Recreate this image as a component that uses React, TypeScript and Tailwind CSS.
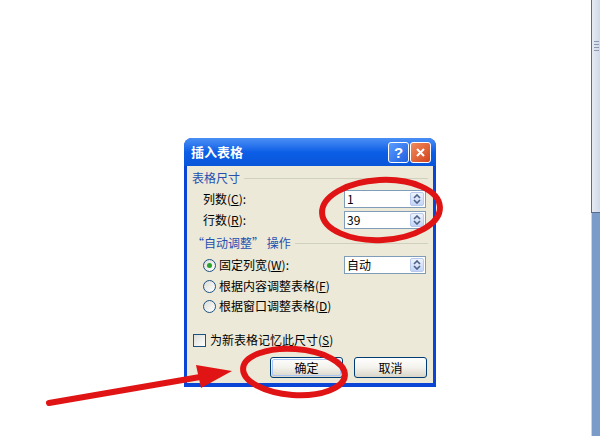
const Spin = ({ value }: { value: string }) => (
  <div className="flex h-[18px] w-[82px] items-center border border-[#7f9db9] bg-white pl-[2px] pr-[1px]">
    <span className="flex-1 text-[12px] leading-[14px] text-black">{value}</span>
    <div className="flex h-[14px] w-[14px] flex-col items-center justify-center rounded-[2px] border border-[#b7c9ef] bg-gradient-to-b from-[#eef3fd] to-[#c3d4f7]">
      <svg width="8" height="10" viewBox="0 0 8 10">
        <path d="M1 4 L4 1 L7 4" fill="none" stroke="#4d6185" strokeWidth="1.6" />
        <path d="M1 6 L4 9 L7 6" fill="none" stroke="#4d6185" strokeWidth="1.6" />
      </svg>
    </div>
  </div>
);

const Radio = ({ checked }: { checked?: boolean }) => (
  <div className="flex h-[13px] w-[13px] items-center justify-center rounded-full border border-[#1c5180] bg-gradient-to-br from-[#dcdcd7] to-white">
    {checked && <div className="h-[5px] w-[5px] rounded-full bg-[#2aa12a]" />}
  </div>
);

const GroupHeader = ({ children }: { children: React.ReactNode }) => (
  <div className="flex h-[14px] items-center pl-[5px] pr-[5px]">
    <span className="text-[12px] leading-[14px] text-[#2450b0]">{children}</span>
    <div className="ml-[4px] h-px flex-1 bg-[#d0d0bf]" />
  </div>
);

const XpButton = ({ label, focused }: { label: string; focused?: boolean }) => (
  <div className="flex h-[21px] w-[73px] items-center justify-center rounded-[3px] border border-[#003c74] bg-gradient-to-b from-white via-[#f3f2ec] to-[#d9d5c9] p-px">
    <div
      className={
        focused
          ? "flex h-full w-full items-center justify-center rounded-[2px] border border-[#a9c6f5]"
          : "flex h-full w-full items-center justify-center"
      }
    >
      <span className="text-[12px] leading-[14px] text-black">{label}</span>
    </div>
  </div>
);

export default function App() {
  return (
    <div className="flex h-[436px] w-[600px] bg-white font-['Noto_Sans_CJK_SC',sans-serif]">
      {/* page area */}
      <div className="relative flex-1 pl-[184px] pt-[138px]">
        <div className="flex h-[249px] w-[252px] flex-col rounded-t-[8px] bg-[#0b45d6]">
          {/* title bar */}
          <div className="flex h-[28px] items-center rounded-t-[8px] bg-gradient-to-b from-[#4a8ff5] via-[#0b5fe6] to-[#0a55da] pl-[7px] pr-[5px]">
            <span className="flex-1 text-[13px] font-bold leading-[16px] text-white">插入表格</span>
            <div className="flex items-center gap-[1px]">
              <div className="flex h-[21px] w-[21px] items-center justify-center rounded-[3px] border border-white bg-gradient-to-br from-[#5b9cff] to-[#1f5fe0]">
                <span className="font-['Liberation_Sans',sans-serif] text-[15px] font-bold leading-none text-white">?</span>
              </div>
              <div className="flex h-[21px] w-[21px] items-center justify-center rounded-[3px] border border-white bg-gradient-to-br from-[#f08a5c] to-[#d2411a]">
                <svg width="11" height="11" viewBox="0 0 11 11">
                  <path d="M2 2 L9 9 M9 2 L2 9" stroke="white" strokeWidth="2" />
                </svg>
              </div>
            </div>
          </div>
          {/* body */}
          <div className="mx-[3px] mb-[4px] flex flex-1 flex-col bg-[#ece9d8] pt-[5px]">
            <GroupHeader>表格尺寸</GroupHeader>
            <div className="mt-[5px] flex h-[18px] items-center pl-[16px] pr-[7px]">
              <span className="flex-1 text-[12px] leading-[14px] text-black">
                列数(<u>C</u>):
              </span>
              <Spin value="1" />
            </div>
            <div className="mt-[3px] flex h-[18px] items-center pl-[16px] pr-[7px]">
              <span className="flex-1 text-[12px] leading-[14px] text-black">
                行数(<u>R</u>):
              </span>
              <Spin value="39" />
            </div>
            <div className="mt-[7px]">
              <GroupHeader>“自动调整” 操作</GroupHeader>
            </div>
            <div className="mt-[6px] flex h-[18px] items-center pl-[16px] pr-[7px]">
              <Radio checked />
              <span className="ml-[3px] flex-1 text-[12px] leading-[14px] text-black">
                固定列宽(<u>W</u>):
              </span>
              <Spin value="自动" />
            </div>
            <div className="mt-[3px] flex h-[18px] items-center pl-[16px]">
              <Radio />
              <span className="ml-[3px] text-[12px] leading-[14px] text-black">
                根据内容调整表格(<u>F</u>)
              </span>
            </div>
            <div className="mt-[2px] flex h-[18px] items-center pl-[16px]">
              <Radio />
              <span className="ml-[3px] text-[12px] leading-[14px] text-black">
                根据窗口调整表格(<u>D</u>)
              </span>
            </div>
            <div className="mt-[16px] flex h-[18px] items-center pl-[6px]">
              <div className="h-[13px] w-[13px] border border-[#1c5180] bg-gradient-to-br from-[#dcdcd7] to-white" />
              <span className="ml-[4px] text-[12px] leading-[14px] text-black">
                为新表格记忆此尺寸(<u>S</u>)
              </span>
            </div>
            <div className="mt-[8px] flex justify-end gap-[11px] pr-[6px]">
              <XpButton label="确定" focused />
              <XpButton label="取消" />
            </div>
          </div>
        </div>

        {/* red annotations */}
        <svg className="pointer-events-none absolute left-0 top-0" width="591" height="436" viewBox="0 0 591 436">
          <ellipse cx="381" cy="210" rx="59" ry="30" fill="none" stroke="#e01414" strokeWidth="6" transform="rotate(-3 381 210)" />
          <ellipse cx="294" cy="372" rx="51" ry="23" fill="none" stroke="#e01414" strokeWidth="6" transform="rotate(4 294 372)" />
          <line x1="49" y1="403" x2="206" y2="376" stroke="#e01414" strokeWidth="6" strokeLinecap="round" />
          <polygon points="232,371 196,365 201,388" fill="#e01414" />
        </svg>
      </div>

      {/* scrollbar strip */}
      <div className="flex w-[9px] flex-col">
        <div className="flex h-[213px] flex-col border-b border-l border-[#5a6b8c] bg-gradient-to-r from-[#e6ebf3] to-[#cfd9e8] pt-[41px]">
          <div className="ml-[2px] flex flex-col gap-[2px]">
            <div className="h-px w-[5px] bg-[#8a98b0]" />
            <div className="h-px w-[5px] bg-[#8a98b0]" />
            <div className="h-px w-[5px] bg-[#8a98b0]" />
            <div className="h-px w-[5px] bg-[#8a98b0]" />
          </div>
        </div>
        <div className="flex-1 border-l border-[#c9d6ea] bg-[#7b9bc9]" />
      </div>
    </div>
  );
}
